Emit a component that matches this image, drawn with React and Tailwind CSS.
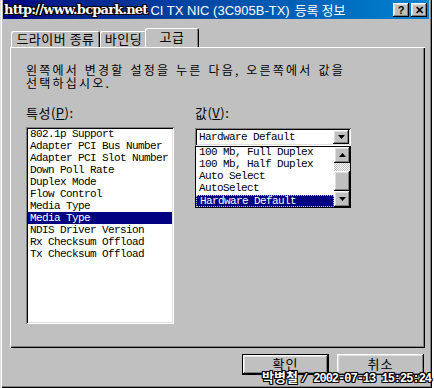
const raised =
  'shadow-[inset_-1px_-1px_#000,inset_1px_1px_#fff,inset_-2px_-2px_#808080,inset_2px_2px_#dfdfdf]';
const sunken =
  'shadow-[inset_1px_1px_#808080,inset_-1px_-1px_#fff,inset_2px_2px_#000,inset_-2px_-2px_#dfdfdf]';
const ko = "font-['Noto_Sans_CJK_KR',sans-serif]";
const mono = "font-['Liberation_Mono',monospace] text-[11px] tracking-[-0.6px]";
const outline = '[text-shadow:1px_0_#000,-1px_0_#000,0_1px_#000,0_-1px_#000,1px_1px_#000,-1px_-1px_#000,1px_-1px_#000,-1px_1px_#000]';

const properties = [
  '802.1p Support',
  'Adapter PCI Bus Number',
  'Adapter PCI Slot Number',
  'Down Poll Rate',
  'Duplex Mode',
  'Flow Control',
  'Media Type',
  'Media Type',
  'NDIS Driver Version',
  'Rx Checksum Offload',
  'Tx Checksum Offload',
];

const values = ['100 Mb, Full Duplex', '100 Mb, Half Duplex', 'Auto Select', 'AutoSelect', 'Hardware Default'];

function Arrow({ up }) {
  return (
    <svg width="7" height="4" viewBox="0 0 7 4">
      <path d={up ? 'M3.5 0 L7 4 L0 4 Z' : 'M0 0 L7 0 L3.5 4 Z'} fill="#000" />
    </svg>
  );
}

function TitleButton({ children }) {
  return (
    <div className={`w-[16px] h-[14px] bg-[#c0c0c0] ${raised} flex items-center justify-center text-[11px] font-bold leading-none text-black font-['Liberation_Sans',sans-serif]`}>
      {children}
    </div>
  );
}

function Tab({ label, w, active }) {
  return (
    <div
      className={`${w} ${active ? 'h-[19px] -mx-[2px] z-10 bg-[#c0c0c0] pt-[2px]' : 'h-[16px]'} rounded-t-[2px] flex items-start justify-center shadow-[inset_1px_1px_#fff,inset_-1px_0_#000,inset_-2px_0_#808080] text-[13px] leading-[14px] tracking-[0.5px] text-black ${ko}`}
    >
      <span className={active ? '' : 'pt-[1px]'}>{label}</span>
    </div>
  );
}

export default function App() {
  return (
    <div className="w-[434px] h-[388px] bg-white relative overflow-hidden">
      <div className="w-[432px] h-[388px] bg-[#c0c0c0] px-[3px] pb-[3px] flex flex-col shadow-[inset_1px_0_#dfdfdf,inset_2px_0_#fff,inset_-1px_-1px_#000,inset_-2px_-2px_#808080]">
        {/* title bar */}
        <div className="h-[19px] bg-gradient-to-r from-[#000080] to-[#1084d0] flex items-center pl-[1px] pr-[2px] relative">
          <span className={`text-white font-bold text-[13px] leading-none font-['DejaVu_Serif',serif] tracking-[-0.8px] ${outline}`}>
            http://www.bcpark.net
          </span>
          <span className={`ml-[3px] text-white text-[13px] leading-none whitespace-nowrap ${ko}`}>
            <span className="font-['Liberation_Sans',sans-serif]">CI TX NIC (3C905B-TX)</span>
            <span className="ml-[5px]">등록 정보</span>
          </span>
          <div className="ml-auto flex gap-[2px] mt-[1px]">
            <TitleButton>?</TitleButton>
            <TitleButton>✕</TitleButton>
          </div>
        </div>

        {/* tabs */}
        <div className="flex items-end h-[19px] mt-[9px] ml-[8px]">
          <Tab label="드라이버 종류" w="w-[89px]" />
          <Tab label="바인딩" w="w-[47px]" />
          <Tab label="고급" w="w-[54px]" active />
        </div>

        {/* panel */}
        <div className={`ml-[7px] w-[415px] h-[301px] shadow-[inset_1px_1px_#fff,inset_-1px_-1px_#000,inset_-2px_-2px_#808080] pt-[16px] pl-[16px] text-black`}>
          <p className={`text-[12px] leading-[13px] tracking-[2.2px] [word-spacing:1px] ${ko}`}>
            왼쪽에서 변경할 설정을 누른 다음, 오른쪽에서 값을
            <br />
            선택하십시오.
          </p>

          <div className="flex gap-[21px] mt-[17px]">
            <div className="w-[148px]">
              <div className={`text-[13px] leading-[14px] tracking-[0.5px] ${ko}`}>
                특성(<span className="underline">P</span>):
              </div>
              <div className={`mt-[7px] h-[197px] bg-white ${sunken} px-[2px] pt-[1px]`}>
                {properties.map((p, i) => (
                  <div
                    key={i}
                    className={`h-[12px] leading-[12px] pl-[2px] ${mono} ${i === 7 ? 'bg-[#000080] text-white' : ''}`}
                  >
                    {p}
                  </div>
                ))}
              </div>
            </div>

            <div className="w-[156px]">
              <div className={`text-[13px] leading-[14px] tracking-[0.5px] ${ko}`}>
                값(<span className="underline">V</span>):
              </div>
              <div className="relative mt-[8px]">
                <div className={`h-[18px] bg-white ${sunken} flex items-center pl-[4px] pr-[2px]`}>
                  <span className={`${mono} leading-[12px]`}>Hardware Default</span>
                  <div className={`ml-auto w-[16px] h-[14px] bg-[#c0c0c0] ${raised} flex items-center justify-center`}>
                    <Arrow />
                  </div>
                </div>
                <div className="absolute left-0 top-[18px] w-[156px] h-[62px] bg-white border border-black flex">
                  <div className="flex-1">
                    {values.map((v, i) => (
                      <div
                        key={v}
                        className={`h-[12px] leading-[11px] pl-[3px] ${mono} ${i === 4 ? 'bg-[#000080] text-white border border-dotted border-[#c0c0c0]' : ''}`}
                      >
                        {v}
                      </div>
                    ))}
                  </div>
                  <div className="w-[16px] flex flex-col">
                    <div className={`h-[16px] bg-[#c0c0c0] ${raised} flex items-center justify-center`}>
                      <Arrow up />
                    </div>
                    <div className="h-[8px] [background:repeating-conic-gradient(#c0c0c0_0_25%,#fff_0_50%)_0_0/2px_2px]" />
                    <div className={`h-[20px] bg-[#c0c0c0] ${raised}`} />
                    <div className={`h-[16px] bg-[#c0c0c0] ${raised} flex items-center justify-center`}>
                      <Arrow />
                    </div>
                  </div>
                </div>
              </div>
            </div>
          </div>
        </div>

        {/* buttons */}
        <div className={`flex gap-[8px] mt-[6px] ml-[239px] text-[13px] text-black ${ko}`}>
          <div className="w-[87px] h-[21px] border border-black">
            <div className={`w-full h-full bg-[#c0c0c0] ${raised} flex items-start justify-center pt-[2px] leading-none tracking-[1px]`}>확인</div>
          </div>
          <div className={`w-[87px] h-[21px] bg-[#c0c0c0] ${raised} flex items-start justify-center pt-[3px] leading-none tracking-[1px]`}>취소</div>
        </div>
      </div>

      {/* photo watermark */}
      <div className={`absolute left-[262px] top-[369px] text-white font-bold text-[13px] leading-[15px] whitespace-nowrap ${outline} ${ko}`}>
        박병철 <span className="font-['Liberation_Mono',monospace] text-[12px] tracking-[-1px]">/ 2002-07-13 15:25:24</span>
      </div>
    </div>
  );
}
